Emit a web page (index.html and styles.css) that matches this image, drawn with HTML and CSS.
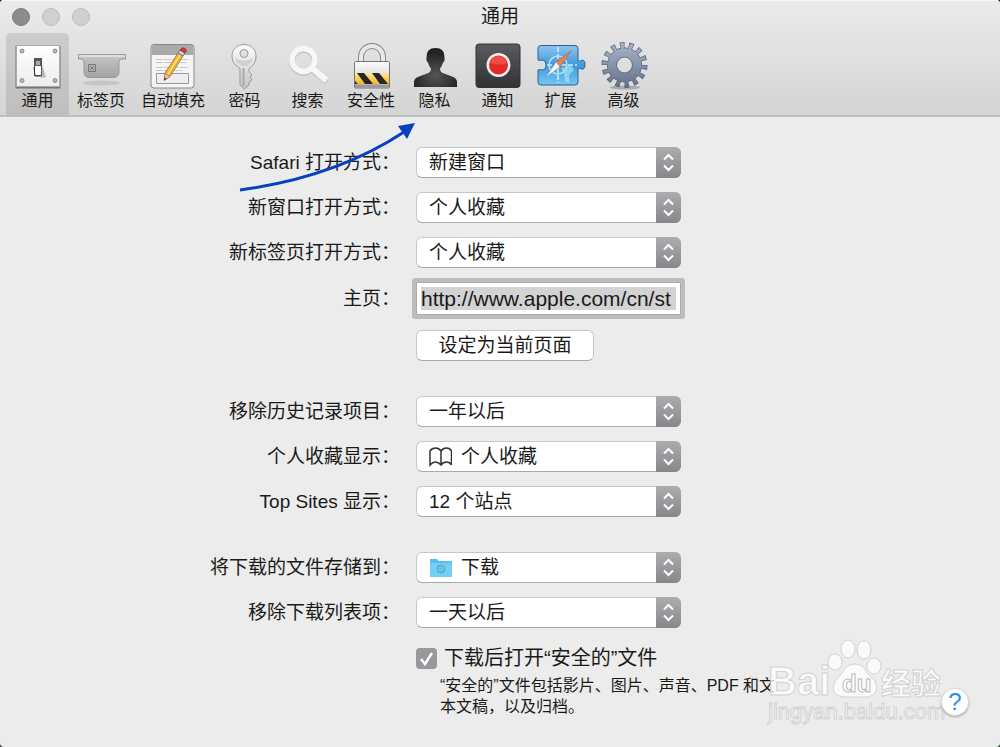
FILE: index.html
```html
<!DOCTYPE html>
<html lang="zh-CN">
<head>
    <meta charset="UTF-8">
    <meta name="viewport" content="width=device-width, initial-scale=1.0">
    <title>通用</title>
    <link rel="stylesheet" href="styles.css">
</head>
<body>
    <svg class="defs" width="0" height="0" aria-hidden="true">
        <defs>
            <linearGradient id="metal" x1="0" y1="0" x2="0" y2="1"><stop offset="0" stop-color="#fdfdfd"/><stop offset="1" stop-color="#c4c4c4"/></linearGradient>
            <linearGradient id="plate" x1="0" y1="0" x2="0" y2="1"><stop offset="0" stop-color="#fff"/><stop offset="1" stop-color="#ededed"/></linearGradient>
            <linearGradient id="tray" x1="0" y1="0" x2="0" y2="1"><stop offset="0" stop-color="#c6c6c6"/><stop offset="1" stop-color="#a3a3a3"/></linearGradient>
            <linearGradient id="dark" x1="0" y1="0" x2="0" y2="1"><stop offset="0" stop-color="#5b5c60"/><stop offset="1" stop-color="#303135"/></linearGradient>
            <linearGradient id="yellow" x1="0" y1="0" x2="0" y2="1"><stop offset="0" stop-color="#fbe89a"/><stop offset="1" stop-color="#f2b51d"/></linearGradient>
            <linearGradient id="blue" x1="0" y1="0" x2="0" y2="1"><stop offset="0" stop-color="#8fc4ee"/><stop offset="0.5" stop-color="#3f98dd"/><stop offset="1" stop-color="#72c9f2"/></linearGradient>
            <linearGradient id="steel" gradientUnits="userSpaceOnUse" x1="0" y1="2" x2="0" y2="46"><stop offset="0" stop-color="#a9b3c9"/><stop offset="1" stop-color="#66708a"/></linearGradient>
            <radialGradient id="person" cx="0.5" cy="0.7" r="0.6"><stop offset="0" stop-color="#555"/><stop offset="1" stop-color="#222"/></radialGradient>
            <symbol id="arrows" viewBox="0 0 25 31">
                <path d="M8 12.5l4.5-4.5 4.5 4.5M8 18.5l4.5 4.5 4.5-4.5" fill="none" stroke="#fff" stroke-width="2"/>
            </symbol>
        </defs>
    </svg>

    <header class="toolbar">
        <div class="titlebar">
            <div class="lights">
                <button class="light light-close" type="button" aria-label="关闭"></button>
                <button class="light" type="button" aria-label="最小化" disabled></button>
                <button class="light" type="button" aria-label="缩放" disabled></button>
            </div>
            <h1>通用</h1>
        </div>
        <nav class="tabs">
            <button class="tab active" type="button">
                <svg viewBox="0 0 50 50">
                    <rect x="2.5" y="5" width="45" height="42.500" fill="#777"/>
                    <rect x="3.500" y="4.500" width="43" height="41" fill="url(#plate)" stroke="#aaa"/>
                    <g fill="#bbb" stroke="#777" stroke-width="0.800"><circle cx="9" cy="10" r="2"/><circle cx="42" cy="10" r="2"/><circle cx="9" cy="39.500" r="2"/><circle cx="42" cy="39.500" r="2"/></g>
                    <path d="M28 20l5 16-5 1z" fill="#bbb"/>
                    <rect x="21.500" y="17.500" width="7" height="17" fill="#fff" stroke="#555"/>
                    <path d="M22 18h6v7h-6z" fill="#555"/><path d="M23 20h4v4h-4z" fill="#aaa"/><path d="M21 26l1 9h6" fill="none" stroke="#333"/>
                </svg>
                <span>通用</span>
            </button>
            <button class="tab" type="button">
                <svg viewBox="0 0 50 50">
                    <ellipse cx="25" cy="42" rx="19" ry="2.500" fill="#c6c6c6"/>
                    <path d="M2.500 13.500h47v4.500h-3.500q-3 0-3 3v10q0 5.500-6 5.500H14q-6 0-6-5.500V21q0-3-3-3H2.500z" fill="url(#tray)" stroke="#999"/>
                    <path d="M3 15h46" stroke="#ddd" stroke-width="2"/>
                    <path d="M12.500 23.500h7v7h-7zM14 25l4 4m0-4l-4 4" fill="none" stroke="#777"/>
                </svg>
                <span>标签页</span>
            </button>
            <button class="tab" type="button">
                <svg viewBox="0 0 50 50">
                    <rect x="3" y="3.500" width="43" height="43.500" rx="3" fill="#f5f5f5" stroke="#888"/>
                    <path d="M3.500 14V6q0-2 2-2h38q2 0 2 2v8z" fill="#aaa"/>
                    <path d="M8 18.500h33M8 21.500h30M8 26.500h33M8 29.500h26" stroke="#c8c8c8" stroke-dasharray="7 1"/>
                    <path d="M8.500 32.500h32v10h-32z" fill="#eee" stroke="#999"/>
                    <path d="M16.500 36.500L17 32 30 12l5 3-13 20.500-5 3.500z" fill="#f2b233" stroke="#96702a" stroke-width="0.800"/>
                    <path d="M20 33l12-19" stroke="#ffe084" stroke-width="1.500"/>
                    <path d="M16 39.500l1-7 5 3z" fill="#e8c69c" stroke="#a66" stroke-width="0.600"/>
                    <path d="M30 12l2-3 5 3-2 3z" fill="#c7d0dc" stroke="#778"/>
                    <path d="M32 9q2-3.500 5-1.500T37 12z" fill="#d93d34" stroke="#a33"/>
                    <path d="M16 39.500l.500-3 2 1.500z" fill="#622"/>
                </svg>
                <span>自动填充</span>
            </button>
            <button class="tab" type="button">
                <svg viewBox="0 0 50 50">
                    <path fill-rule="evenodd" d="M24 3.500c7 0 12 5 12 11.500 0 6-3 10-7 12.500V31l3 3-2 2 2 3-3 2v3l-4.500 4-4.500-4V27.500C16 25 12 21 12 15 12 8.500 17 3.500 24 3.500zM24 8.500a4 4 0 100 8 4 4 0 000-8z" fill="url(#metal)" stroke="#999"/>
                    <path d="M15 17q9 5 18 0-1 7-9 8-8-1-9-8z" fill="#bbb" opacity=".5"/>
                    <path d="M23.500 27v18" stroke="#aaa" stroke-width="2"/>
                </svg>
                <span>密码</span>
            </button>
            <button class="tab" type="button">
                <svg viewBox="0 0 50 50">
                    <g fill="none" stroke="#c6c6c6"><circle cx="20.500" cy="20.500" r="11.500" stroke-width="6"/><path d="M29 29l15 12" stroke-width="6"/></g>
                    <g fill="none" stroke="#f7f7f7"><circle cx="20.500" cy="19" r="11.500" stroke-width="5.500"/><path d="M29 27l14.500 12.500" stroke-width="6"/></g>
                </svg>
                <span>搜索</span>
            </button>
            <button class="tab" type="button">
                <svg viewBox="0 0 50 50">
                    <path d="M15 21v-5a11 11 0 0122 0v5" fill="none" stroke="#888" stroke-width="6"/>
                    <path d="M15 21v-5a11 11 0 0122 0v5" fill="none" stroke="#e9e9e9" stroke-width="4"/>
                    <rect x="8.500" y="20.500" width="35" height="26.500" rx="1" fill="url(#metal)" stroke="#777"/>
                    <path d="M9 32h34v11H9z" fill="url(#yellow)"/>
                    <path d="M11 32h7l9 11h-8zM26 32h7l9 11h-8zM9 40l3 3H9z" fill="#272727"/>
                    <path d="M9 43.500h34v3H9z" fill="#999"/>
                </svg>
                <span>安全性</span>
            </button>
            <button class="tab" type="button">
                <svg viewBox="0 0 50 50">
                    <path d="M4 46v-5q0-4 5-5.500l8-3q4-1 4-5-2-2-3-6-2-1-1.500-5Q16 7 25.500 7T34.500 16.500q.500 4-1.500 5-1 4-3 6 0 4 4 5l8 3q5 1.500 5 5.500v5z" fill="url(#person)"/>
                </svg>
                <span>隐私</span>
            </button>
            <button class="tab" type="button">
                <svg viewBox="0 0 50 50">
                    <rect x="3" y="3" width="44" height="43.500" rx="3" fill="url(#dark)" stroke="#333"/>
                    <circle cx="25.500" cy="24" r="12" fill="#f2eeee"/>
                    <circle cx="25.500" cy="24" r="9.500" fill="#e02b26"/>
                    <path d="M17 22q1-7 8.500-7T34 22q-8 3-17 0z" fill="#f2685f" opacity=".6"/>
                </svg>
                <span>通知</span>
            </button>
            <button class="tab" type="button">
                <svg viewBox="0 0 50 50">
                    <path d="M5 4.500h34q3 0 3 3V20q1 1 3-.500 4-1.500 4 4t-4 4.500q-2-1.500-3-.500V41q0 3-3 3H5q-3 0-3-3V29q1-1 3 0 5 0 5-5t-5-5q-2 1-3 0V7.500q0-3 3-3z" fill="url(#blue)" stroke="#315f91"/>
                    <path d="M22 6v36M11 24h30" stroke="#d4edfb" stroke-width="1.500" stroke-dasharray="5 2"/>
                    <circle cx="22" cy="24" r="9" fill="none" stroke="#b9e2f8" stroke-width="1.500"/>
                    <path d="M25 27l10-3 3 5-5 5v8l-4-2-1-7z" fill="#a5e1f5" opacity=".7"/>
                    <path d="M35 10L20 21l4 5z" fill="#e78350" stroke="#a7624a" stroke-width="0.600"/>
                    <path d="M20 21l4 5-14 10z" fill="#f7f7f7" stroke="#8797a7" stroke-width="0.600"/>
                </svg>
                <span>扩展</span>
            </button>
            <button class="tab" type="button">
                <svg viewBox="0 0 50 50">
                    <ellipse cx="26" cy="46.500" rx="15" ry="2" fill="#aaa"/>
                    <g fill="none">
                        <circle cx="25.500" cy="24" r="19.500" pathLength="28" stroke="#59627a" stroke-width="7" stroke-dasharray="1 1"/>
                        <circle cx="25.500" cy="24" r="12.500" stroke="#59627a" stroke-width="10"/>
                        <circle cx="25.500" cy="24" r="19" pathLength="28" stroke="url(#steel)" stroke-width="6.500" stroke-dasharray="0.700 1.300" stroke-dashoffset="-0.150"/>
                        <circle cx="25.500" cy="24" r="12.500" stroke="url(#steel)" stroke-width="8.500"/>
                    </g>
                </svg>
                <span>高级</span>
            </button>
        </nav>
    </header>

    <main>
        <form class="settings">
            <section class="group">
                <label for="open-with">Safari 打开方式：</label>
                <div class="popup">
                    <select id="open-with"><option>新建窗口</option></select>
                    <svg class="popup-arrows"><use href="#arrows"/></svg>
                </div>
                <label for="new-window">新窗口打开方式：</label>
                <div class="popup">
                    <select id="new-window"><option>个人收藏</option></select>
                    <svg class="popup-arrows"><use href="#arrows"/></svg>
                </div>
                <label for="new-tab">新标签页打开方式：</label>
                <div class="popup">
                    <select id="new-tab"><option>个人收藏</option></select>
                    <svg class="popup-arrows"><use href="#arrows"/></svg>
                </div>
                <label for="homepage">主页：</label>
                <input class="homepage" id="homepage" type="text" value="http://www.apple.com/cn/st">
                <button class="set-page" type="button">设定为当前页面</button>
            </section>

            <section class="group">
                <label for="history">移除历史记录项目：</label>
                <div class="popup">
                    <select id="history"><option>一年以后</option></select>
                    <svg class="popup-arrows"><use href="#arrows"/></svg>
                </div>
                <label for="favorites">个人收藏显示：</label>
                <div class="popup with-icon">
                    <select id="favorites"><option>个人收藏</option></select>
                    <svg class="popup-icon" viewBox="0 0 24 20"><path d="M13 17V4Q11 1 7.500 1T2 4v14q2.500-3 5.500-3t5.500 3q2-3 5.500-3t5 3V4q-1.500-3-5-3T13 4" fill="none" stroke="#333" stroke-width="1.500"/></svg>
                    <svg class="popup-arrows"><use href="#arrows"/></svg>
                </div>
                <label for="top-sites">Top Sites 显示：</label>
                <div class="popup">
                    <select id="top-sites"><option>12 个站点</option></select>
                    <svg class="popup-arrows"><use href="#arrows"/></svg>
                </div>
            </section>

            <section class="group">
                <label for="download-to">将下载的文件存储到：</label>
                <div class="popup with-icon">
                    <select id="download-to"><option>下载</option></select>
                    <svg class="popup-icon" viewBox="0 0 24 20"><path d="M2 1h7l2 2h13v16H2z" fill="#5bbdea"/><path d="M2 5h22v14H2z" fill="#73cff6"/><circle cx="13" cy="11" r="4" fill="#6cc0e6" stroke="#4ba9d6"/></svg>
                    <svg class="popup-arrows"><use href="#arrows"/></svg>
                </div>
                <label for="download-list">移除下载列表项：</label>
                <div class="popup">
                    <select id="download-list"><option>一天以后</option></select>
                    <svg class="popup-arrows"><use href="#arrows"/></svg>
                </div>
                <div class="safe-files">
                    <div class="check">
                        <input id="open-safe" type="checkbox" checked>
                        <svg class="tick" viewBox="0 0 21 21"><path d="M5 11l4 5 7-11" fill="none" stroke="#fff" stroke-width="2.500"/></svg>
                        <label for="open-safe">下载后打开“安全的”文件</label>
                    </div>
                    <div class="note-row">
                        <p>“安全的”文件包括影片、图片、声音、PDF 和文<br>本文稿，以及归档。</p>
                        <button class="help" type="button" aria-label="帮助">?</button>
                    </div>
                </div>
            </section>
        </form>
    </main>

    <!-- pointer to the privacy tab -->
    <svg class="pointer" viewBox="0 0 180 72" aria-hidden="true">
        <path d="M2 69Q98 56 166 11" fill="none" stroke="#0a40c0" stroke-width="3"/>
        <path d="M177 2l-17 3 9 13z" fill="#0a40c0"/>
    </svg>

    <svg class="watermark" viewBox="0 0 184 90" aria-hidden="true">
        <g class="mark">
            <text class="mark-name" x="1" y="58">Bai</text>
            <ellipse cx="68" cy="25" rx="7" ry="8"/>
            <ellipse cx="81" cy="12" rx="7" ry="9"/>
            <ellipse cx="97" cy="13" rx="7" ry="9"/>
            <ellipse cx="107" cy="29" rx="7" ry="8"/>
            <path d="M88 27q-9 0-13 9l-7 8q-6 14 8 16h24q14-2 8-16l-8-8q-4-9-12-9z"/>
            <text class="mark-du" x="75" y="55">du</text>
            <text class="mark-cn" x="114" y="57">经验</text>
            <text class="mark-url" x="1" y="82">jingyan.baidu.com</text>
        </g>
    </svg>
</body>
</html>
```

FILE: styles.css
```css
* {
    margin: 0;
    padding: 0;
    box-sizing: border-box;
}

html {
    background-color: #24351f;
}

body {
    position: relative;
    min-height: 100vh;
    overflow: hidden;
    font-family: "Liberation Sans", "Noto Sans CJK SC", sans-serif;
    font-size: 19px;
    color: #1a1a1a;
    background-color: #ececec;
    border-radius: 4px;
}

button,
input,
select {
    font: inherit;
    color: inherit;
}

.defs {
    position: absolute;
}

.toolbar {
    background: linear-gradient(#ebebeb, #d4d4d4);
    border-top: 1px solid #f6f6f6;
    border-bottom: 2px solid #bfbfbf;
}

.titlebar {
    display: grid;
    grid-template-columns: 1fr auto 1fr;
    align-items: center;
    height: 32px;
    padding: 0 12px;
}

.titlebar h1 {
    font-size: 19px;
    font-weight: normal;
    line-height: 32px;
}

.lights {
    display: flex;
    gap: 12px;
}

.light {
    width: 18px;
    height: 18px;
    border: 1px solid #bbb;
    border-radius: 50%;
    background-color: #d0d0d0;
}

.light-close {
    border-color: #7b7b80;
    background-color: #8b8b90;
}

.tabs {
    display: flex;
    padding: 0 6px;
}

.tab {
    display: flex;
    flex-direction: column;
    align-items: center;
    min-width: 63px;
    padding: 8px 8px 4px;
    border: none;
    background: none;
    font-size: 16px;
    line-height: 20px;
}

.tab svg {
    width: 50px;
    height: 50px;
    margin: 0 -2px;
}

.tab.active {
    background-color: rgba(0, 0, 0, 0.1);
    border-radius: 5px 5px 0 0;
}

.settings {
    display: flex;
    flex-direction: column;
    gap: 35px;
    padding: 30px 24px 28px 0;
}

.group {
    display: grid;
    grid-template-columns: 5fr 7fr;
    column-gap: 16px;
    row-gap: 14px;
    align-items: center;
}

.group > label {
    text-align: right;
    line-height: 31px;
}

.popup {
    display: grid;
    grid-template-columns: 12px 24px 1fr 25px;
    align-items: center;
    width: 265px;
    height: 31px;
}

.popup select {
    grid-area: 1 / 1 / 2 / 5;
    width: 100%;
    height: 31px;
    padding: 0 38px 0 12px;
    appearance: none;
    border: 1px solid #c6c6c6;
    border-bottom-color: #aaa;
    border-radius: 6px;
    background-color: #fff;
}

.popup.with-icon select {
    padding-left: 44px;
}

.popup-icon {
    grid-area: 1 / 2;
    width: 24px;
    height: 20px;
    pointer-events: none;
}

.popup-arrows {
    grid-area: 1 / 4;
    width: 25px;
    height: 31px;
    border-radius: 0 6px 6px 0;
    background: linear-gradient(#adadb0, #87878b);
    pointer-events: none;
}

/* focused field, its text selected */
.homepage {
    width: 265px;
    height: 33px;
    padding: 4px;
    border: 1px solid #aaa;
    border-radius: 1px;
    outline: none;
    background: linear-gradient(#d3d3d3, #d3d3d3) content-box, #fff;
    box-shadow: 0 0 0 4px #bdbdbd;
    font-size: 21px;
}

.set-page {
    grid-column: 2;
    width: 178px;
    height: 31px;
    margin-top: 1px;
    border: 1px solid #c6c6c6;
    border-bottom-color: #aaa;
    border-radius: 6px;
    background-color: #fff;
    line-height: 26px;
}

.safe-files {
    grid-column: 2;
    padding-top: 2px;
}

.check {
    display: grid;
    grid-template-columns: 21px 1fr;
    column-gap: 7px;
    align-items: center;
    font-size: 20px;
}

.check input {
    grid-area: 1 / 1;
    width: 21px;
    height: 21px;
    appearance: none;
    border-radius: 4px;
    background-color: #98989c;
}

.check label {
    line-height: 29px;
}

.tick {
    grid-area: 1 / 1;
    width: 21px;
    height: 21px;
    pointer-events: none;
}

.note-row {
    display: flex;
    align-items: center;
    justify-content: space-between;
    padding: 2px 7px 0 24px;
    font-size: 16px;
    line-height: 21px;
}

.help {
    width: 28px;
    height: 28px;
    margin-top: 12px;
    border: 1px solid #ddd;
    border-radius: 50%;
    background-color: #fff;
    box-shadow: 0 1px 2px rgba(0, 0, 0, 0.3);
    color: #2b8cf0;
    font-size: 24px;
    line-height: 26px;
    position: relative;
    z-index: 2;
}

.pointer {
    position: absolute;
    top: 121px;
    left: 238px;
    width: 180px;
    height: 72px;
    pointer-events: none;
}

.watermark {
    position: absolute;
    top: 637px;
    right: 49px;
    width: 184px;
    height: 90px;
    pointer-events: none;
}

.mark {
    fill: rgba(255, 255, 255, 0.75);
    stroke: #d2d2d2;
    stroke-width: 1px;
}

.mark-name {
    font-size: 40px;
    font-weight: bold;
}

.mark-du {
    font-size: 24px;
    font-weight: bold;
    stroke: #bbb;
}

.mark-cn {
    font-size: 30px;
    font-weight: bold;
}

.mark-url {
    font-size: 22px;
}
```
